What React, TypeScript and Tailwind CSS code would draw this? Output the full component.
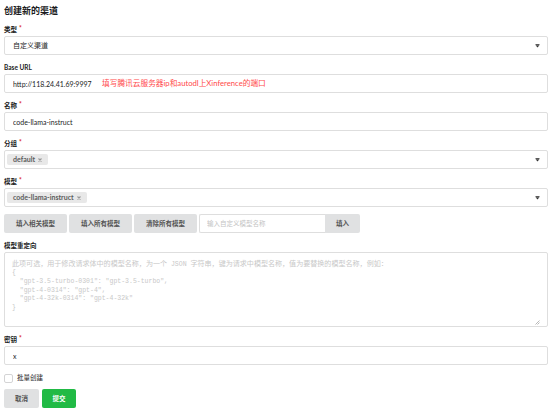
import { useState } from "react";

const font = "font-['Lato','Noto_Sans_CJK_SC',sans-serif]";
const mono = "font-['Liberation_Mono','DejaVu_Sans_Mono','Noto_Sans_CJK_SC']";

function Label({ text, req }: { text: string; req?: boolean }) {
  return (
    <div className="mb-[2px] h-[9px] text-[6.5px] font-bold leading-[9px] text-[#1b1c1d]">
      {text}
      {req && <span className="relative top-[-1px] ml-[2px] text-[#db2828]">*</span>}
    </div>
  );
}

function Caret() {
  return (
    <svg width="5" height="4" viewBox="0 0 5 4" className="shrink-0">
      <rect x="0.5" y="0" width="4" height="0.8" fill="#333" />
      <polygon points="0.5,1.2 4.5,1.2 2.5,3.4" fill="#333" />
    </svg>
  );
}

function Tag({ text }: { text: string }) {
  return (
    <span className="flex h-[11px] items-center gap-[3px] rounded-[2px] bg-[#e8e8e8] px-[6px] text-[7px] font-bold text-[#5c5c5c]">
      {text}
      <svg width="4" height="4" viewBox="0 0 4 4">
        <path d="M0.5 0.5 L3.5 3.5 M3.5 0.5 L0.5 3.5" stroke="#999" strokeWidth="1.1" />
      </svg>
    </span>
  );
}

export default function App() {
  const [batch, setBatch] = useState(false);
  const box = "block h-[19px] w-full rounded-[2px] border border-[#dedede] bg-white";

  return (
    <div className={`${font} min-h-[412px] w-[553px] bg-white px-[4px] pt-[5px] pr-[5px] text-[#1b1c1d]`}>
      <h3 className="mb-[8px] h-[12px] text-[9px] font-bold leading-[12px]">创建新的渠道</h3>

      <Label text="类型" req />
      <div className={`${box} mb-[8px] flex items-center justify-between pl-[8px] pr-[7px] text-[7px]`}>
        <span>自定义渠道</span>
        <Caret />
      </div>

      <Label text="Base URL" />
      <div className="relative mb-[8px] h-[19px]">
        <input className={`${box} px-[8px] text-[7px] outline-none`} defaultValue="http://118.24.41.69:9997" />
        <span className="absolute left-[98px] top-[3px] text-[7.7px] leading-[12px] text-[#ff4a4a]">
          填写腾讯云服务器ip和autodl上Xinference的端口
        </span>
      </div>

      <Label text="名称" req />
      <input className={`${box} mb-[8px] px-[8px] text-[7px] outline-none`} defaultValue="code-llama-instruct" />

      <Label text="分组" req />
      <div className={`${box} mb-[8px] flex items-center justify-between pl-[2px] pr-[7px]`}>
        <Tag text="default" />
        <Caret />
      </div>

      <Label text="模型" req />
      <div className={`${box} mb-[7px] flex items-center justify-between pl-[2px] pr-[7px]`}>
        <Tag text="code-llama-instruct" />
        <Caret />
      </div>

      <div className="mb-[8px] flex h-[19px] gap-[2px]">
        {["填入相关模型", "填入所有模型", "清除所有模型"].map((t) => (
          <button key={t} className="w-[63px] rounded-[2px] bg-[#e0e1e2] text-[6.5px] font-bold text-[#555]">
            {t}
          </button>
        ))}
        <div className="flex w-[161px]">
          <input
            className="block h-[19px] w-[126px] rounded-l-[2px] border border-r-0 border-[#dedede] px-[7px] text-[6.5px] outline-none placeholder:text-[#c4c4c4]"
            placeholder="输入自定义模型名称"
          />
          <button className="w-[35px] rounded-r-[2px] bg-[#e0e1e2] text-[6.5px] font-bold text-[#555]">填入</button>
        </div>
      </div>

      <Label text="模型重定向" />
      <div className="mb-[8px] flex h-[75px] w-full flex-col rounded-[2px] border border-[#dedede] px-[7px] pt-[6px] text-[#c8c8c8]">
        <div className="text-[7.05px] leading-[9px]">
          此项可选，用于修改请求体中的模型名称，为一个
          <span className={`${mono} text-[6.5px]`}> JSON </span>
          字符串，键为请求中模型名称，值为要替换的模型名称，例如：
        </div>
        <pre className={`${mono} text-[6.5px] leading-[8.8px]`}>{`{
  "gpt-3.5-turbo-0301": "gpt-3.5-turbo",
  "gpt-4-0314": "gpt-4",
  "gpt-4-32k-0314": "gpt-4-32k"
}`}</pre>
        <div className="mt-auto mb-[1px] flex justify-end">
          <svg width="5" height="5" viewBox="0 0 5 5">
            <path d="M4.5 0.5 L0.5 4.5 M4.5 2.5 L2.5 4.5" stroke="#999" strokeWidth="0.7" />
          </svg>
        </div>
      </div>

      <Label text="密钥" req />
      <input className={`${box} mb-[8px] px-[8px] text-[7px] outline-none`} defaultValue="x" />

      <label className="mb-[6px] flex h-[10px] items-center gap-[4px] text-[6.5px]">
        <span
          onClick={() => setBatch(!batch)}
          className="h-[9px] w-[9px] rounded-[2px] border border-[#d4d4d5] bg-white"
        />
        批量创建
      </label>

      <div className="flex gap-[3px]">
        <button className="h-[19px] w-[35px] rounded-[2px] bg-[#e0e1e2] text-[6.5px] font-bold text-[#555]">取消</button>
        <button className="h-[19px] w-[34px] rounded-[2px] bg-[#21ba45] text-[6.5px] font-bold text-white">提交</button>
      </div>
    </div>
  );
}
